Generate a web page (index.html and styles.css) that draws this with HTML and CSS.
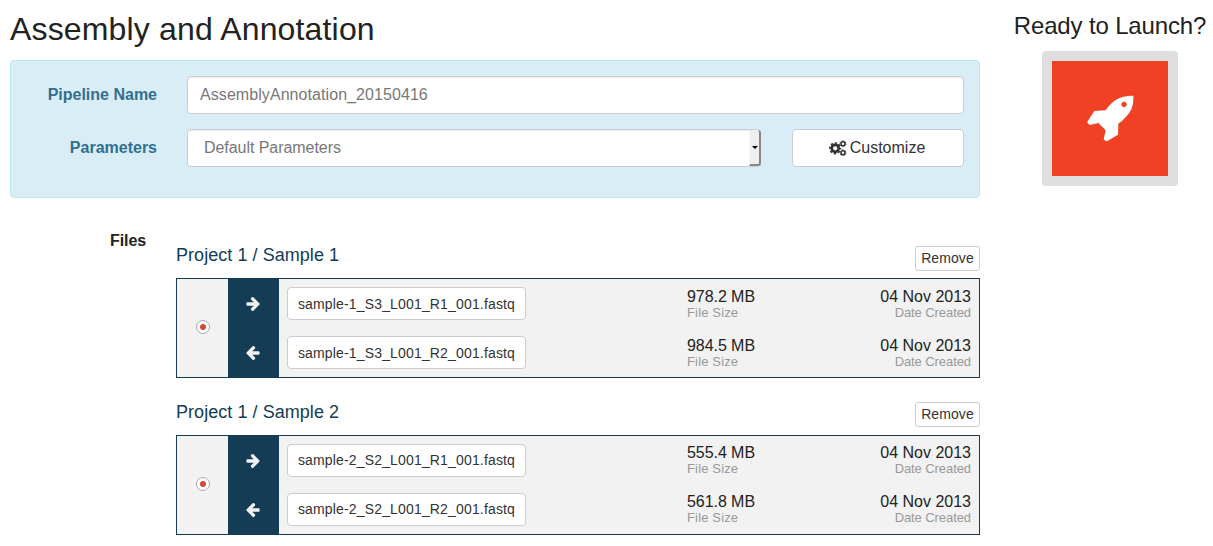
FILE: index.html
```html
<!DOCTYPE html>
<html lang="en">
<head>
<meta charset="utf-8">
<title>Assembly and Annotation</title>
<link rel="stylesheet" href="styles.css">
</head>
<body>
<svg class="sprite" aria-hidden="true">
  <symbol id="arrow" viewBox="0 181 1472 1558"><path d="M1472 960q0 54-37 91l-651 651q-39 37-91 37-51 0-90-37l-75-75q-38-38-38-91t38-91l293-293H117q-52 0-84.5-37.5T0 1024V896q0-53 32.5-90.5T117 768h704L528 474q-38-36-38-90t38-90l75-75q38-38 90-38 53 0 91 38l651 651q37 35 37 90z"/></symbol>
</svg>
<div class="page">
  <main class="main">
    <h1 class="title">Assembly and Annotation</h1>
    <section class="panel">
      <div class="field">
        <label class="label">Pipeline Name</label>
        <div class="control name">AssemblyAnnotation_20150416</div>
      </div>
      <div class="field">
        <label class="label">Parameters</label>
        <div class="control select">Default Parameters<span class="drop"></span></div>
        <button class="customize">
          <svg class="cogs" viewBox="0 0 18 16" fill="none" stroke="currentColor">
            <circle cx="6.2" cy="8.3" r="3.5" stroke-width="2.7"/>
            <circle cx="6.2" cy="8.3" r="5.3" stroke-width="1.6" stroke-dasharray="2.3 1.863" stroke-dashoffset="1.15"/>
            <circle cx="14" cy="3.8" r="2" stroke-width="1.5"/>
            <circle cx="14" cy="3.8" r="3" stroke-width=".9" stroke-dasharray="1.7 1.442"/>
            <circle cx="14" cy="12.8" r="2" stroke-width="1.5"/>
            <circle cx="14" cy="12.8" r="3" stroke-width=".9" stroke-dasharray="1.7 1.442"/>
          </svg>
          <span>Customize</span>
        </button>
      </div>
    </section>
    <section class="files">
      <div class="files-label">Files</div>
      <div class="samples">
        <article class="sample">
          <header class="sample-head"><h2 class="sample-name">Project 1 / Sample 1</h2><button class="remove">Remove</button></header>
          <div class="pair">
            <div class="pick"><span class="radio"></span></div>
            <div class="arrows"><svg class="arrow"><use href="#arrow"/></svg><svg class="arrow back"><use href="#arrow"/></svg></div>
            <div class="rows">
              <div class="row"><button class="file">sample-1_S3_L001_R1_001.fastq</button><div class="meta size"><b>978.2 MB</b><small>File Size</small></div><div class="meta date"><b>04 Nov 2013</b><small>Date Created</small></div></div>
              <div class="row"><button class="file">sample-1_S3_L001_R2_001.fastq</button><div class="meta size"><b>984.5 MB</b><small>File Size</small></div><div class="meta date"><b>04 Nov 2013</b><small>Date Created</small></div></div>
            </div>
          </div>
        </article>
        <article class="sample">
          <header class="sample-head"><h2 class="sample-name">Project 1 / Sample 2</h2><button class="remove">Remove</button></header>
          <div class="pair">
            <div class="pick"><span class="radio"></span></div>
            <div class="arrows"><svg class="arrow"><use href="#arrow"/></svg><svg class="arrow back"><use href="#arrow"/></svg></div>
            <div class="rows">
              <div class="row"><button class="file">sample-2_S2_L001_R1_001.fastq</button><div class="meta size"><b>555.4 MB</b><small>File Size</small></div><div class="meta date"><b>04 Nov 2013</b><small>Date Created</small></div></div>
              <div class="row"><button class="file">sample-2_S2_L001_R2_001.fastq</button><div class="meta size"><b>561.8 MB</b><small>File Size</small></div><div class="meta date"><b>04 Nov 2013</b><small>Date Created</small></div></div>
            </div>
          </div>
        </article>
      </div>
    </section>
  </main>
  <aside class="launch">
    <h2 class="launch-title">Ready to Launch?</h2>
    <button class="launch-button" aria-label="Launch">
      <svg class="rocket" viewBox="262 285 141 141"><path fill="#fff" fill-rule="evenodd" d="M401 287Q404 327 379 350Q369 362 356 371L355 404L323 423Q319 425 316 421L312 418L318 391L296 369L270 375L264 369Q262 367 264 364L284 333L318 331Q346 285 401 287ZM373 305.500a8 8 0 1 0 .1 0Z"/></svg>
    </button>
  </aside>
</div>
</body>
</html>
```
FILE: styles.css
```css
* { box-sizing: border-box; }
body { margin: 0; background: #fff; color: #222; font: 16px/20px "Liberation Sans", Arial, sans-serif; }
button { font: inherit; color: #333; background: #fff; border: 1px solid #ccc; border-radius: 4px; padding: 0; }
h1, h2 { margin: 0; font-weight: 400; }
.sprite { display: none; }
.page { display: flex; height: 546px; overflow: hidden; }
.main { width: 980px; padding-left: 10px; }
.title { height: 60px; padding-top: 11px; font-size: 32px; line-height: 36px; letter-spacing: .16px; white-space: nowrap; }
.panel { height: 138px; padding: 15px; background: #d9edf7; border: 1px solid #bce8f1; border-radius: 4px; }
.field { display: flex; height: 38px; margin-bottom: 15px; }
.label { width: 131px; margin-right: 30px; text-align: right; font-weight: 700; line-height: 38px; color: #31708f; }
.control { height: 38px; border: 1px solid #ccc; border-radius: 4px; background: #fff; box-shadow: inset 0 1px 1px rgba(0,0,0,.075); color: #777; line-height: 36px; }
.name { width: 777px; padding-left: 12px; letter-spacing: .07px; }
.select { display: flex; justify-content: space-between; width: 574px; padding-left: 16px; letter-spacing: -.05px; }
.drop { display: flex; align-items: center; justify-content: center; width: 12px; height: 36px; margin-right: -1px; background: #eee; border: solid #888; border-width: 0 2px 2px 0; border-left: 1px solid #f8f8f8; border-radius: 0 3px 3px 0; }
.drop::after { content: ""; border: solid transparent; border-width: 3px 3px 0; border-top-color: #000; }
.customize { display: flex; align-items: center; justify-content: center; gap: 3px; width: 172px; height: 38px; margin-left: 31px; padding: 0 2px 1px 0; }
.cogs { width: 18px; height: 16px; }
.files { display: flex; padding-top: 32px; }
.files-label { width: 136px; margin-right: 30px; padding-top: 1px; text-align: right; font-weight: 700; letter-spacing: -.1px; }
.samples { width: 804px; padding-top: 15.6px; }
.sample { height: 156.4px; }
.sample-head { display: flex; justify-content: space-between; height: 32.6px; }
.sample-name { padding-top: .6px; font-size: 18px; line-height: 19px; letter-spacing: .05px; color: #143c55; }
.remove { width: 65px; height: 25px; font-size: 14px; line-height: 21px; letter-spacing: .1px; border-radius: 3px; }
.pair { display: flex; height: 100px; border: 1px solid #143c55; background: #f2f2f2; }
.pick { display: grid; place-items: center; width: 51px; padding: 0 0 1.8px 1px; }
.radio { width: 14px; height: 14px; border: 1px solid #aaa; border-radius: 50%; background: radial-gradient(circle, #dc4834 2.6px, #fff 3.4px); }
.arrows { display: flex; flex-direction: column; align-items: center; gap: 35px; width: 51px; padding: 18.2px 1px 0 0; background: #143c55; }
.arrow { width: 14px; height: 14px; fill: #f2f2f2; }
.back { transform: scaleX(-1); }
.rows { flex: 1; padding: 0 8px; }
.row { display: flex; height: 49px; padding-top: 8px; }
.file { width: 239px; height: 33px; padding-top: .7px; font-size: 14px; line-height: 30px; letter-spacing: .16px; white-space: nowrap; }
.meta { display: flex; flex-direction: column; margin-top: -.15px; white-space: nowrap; }
.meta b { font-weight: 400; line-height: 19px; }
.meta small { font-size: 13px; line-height: 14px; letter-spacing: -.08px; color: #999; }
.size { margin-left: 161px; }
.size b { letter-spacing: -.06px; }
.size small { letter-spacing: .15px; }
.date { margin-left: auto; align-items: flex-end; }
.launch { display: flex; flex-direction: column; align-items: center; width: 233px; padding: 11px 0 0 27px; }
.launch-title { height: 40px; font-size: 24px; line-height: 29px; letter-spacing: -.15px; white-space: nowrap; }
.launch-button { display: grid; place-items: center; width: 136px; height: 135px; background: #f04124; border: 10px solid #dedede; border-radius: 4px; }
.rocket { width: 47px; height: 47px; }
```
